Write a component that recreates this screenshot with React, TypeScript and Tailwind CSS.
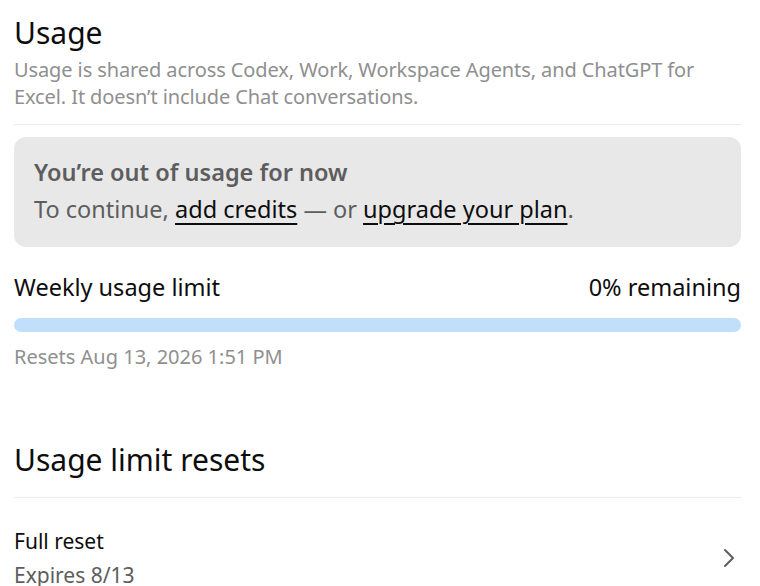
const font = { fontFamily: '"Noto Sans", "Open Sans", sans-serif' };

export default function App() {
  return (
    <div className="min-h-[586px] bg-white pl-[14px] pr-[19px] overflow-hidden" style={font}>
      {/* Usage header */}
      <section className="pt-[14px] pb-[14px] border-b border-[#ececec]">
        <h1 className="text-[30px] leading-[38px] mb-[4px] text-[#0d0d0d]">Usage</h1>
        <p className="text-[20px] leading-[27px] tracking-[-0.1px] text-[#8f8f8f]">
          Usage is shared across Codex, Work, Workspace Agents, and ChatGPT for
          <br />
          Excel. It doesn’t include Chat conversations.
        </p>
      </section>

      {/* Out of usage notice */}
      <div className="mt-[12px] rounded-xl bg-[#e8e8e8] px-[20px] pt-[17px] pb-[19px]">
        <p className="text-[23.5px] leading-[37px] font-semibold text-[#5d5d5d]">You’re out of usage for now</p>
        <p className="text-[23.5px] leading-[37px] text-[#5d5d5d]">
          To continue, <a className="text-[#0d0d0d] underline decoration-[1.5px] underline-offset-[5px]">add credits</a> — or{" "}
          <a className="text-[#0d0d0d] underline decoration-[1.5px] underline-offset-[5px]">upgrade your plan</a>.
        </p>
      </div>

      {/* Weekly limit */}
      <div className="mt-[22px]">
        <div className="flex items-center justify-between text-[23.5px] leading-[36px] text-[#0d0d0d]">
          <span>Weekly usage limit</span>
          <span>0% remaining</span>
        </div>
        <div className="mt-[13px] h-[14px] w-full rounded-full bg-[#c0dffb]" />
        <p className="mt-[10px] text-[20px] leading-[30px] text-[#8f8f8f]">Resets Aug 13, 2026 1:51 PM</p>
      </div>

      {/* Usage limit resets */}
      <section className="mt-[67px]">
        <h2 className="text-[30px] leading-[42px] text-[#0d0d0d] pb-[16px] border-b border-[#ececec]">Usage limit resets</h2>
        <div className="flex items-center justify-between pt-[26px]">
          <div>
            <p className="text-[21px] leading-[34px] text-[#0d0d0d]">Full reset</p>
            <p className="text-[21px] leading-[34px] text-[#5d5d5d]">Expires 8/13</p>
          </div>
          <svg width="12" height="20" viewBox="0 0 12 20" fill="none" className="mr-[6px]">
            <path d="M2 2l8 8-8 8" stroke="#5d5d5d" strokeWidth="2" strokeLinecap="round" strokeLinejoin="round" />
          </svg>
        </div>
      </section>
    </div>
  );
}
